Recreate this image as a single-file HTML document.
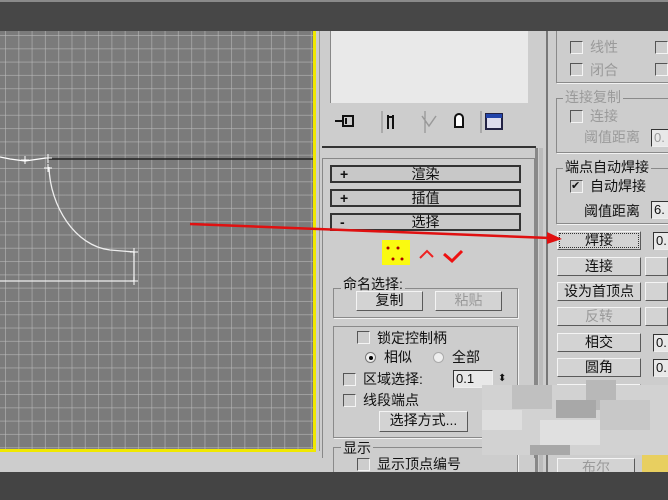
<!DOCTYPE html>
<html><head><meta charset="utf-8"><style>
*{margin:0;padding:0;box-sizing:border-box}
body{width:668px;height:500px;overflow:hidden;background:#cdcdcd;position:relative;font-family:"Liberation Sans","Noto Sans CJK SC",sans-serif;font-size:14px;color:#111}
.a{position:absolute}
.top{left:0;top:0;width:668px;height:31px;background:#474747;border-top:2px solid #8a8a8a}
.bot{left:0;top:472px;width:668px;height:28px;background:#444}
.vp{left:0;top:31px;width:316px;height:421px;background-color:#7b7b7b;border-right:3px solid #f0e800;border-bottom:3px solid #f0e800;
background-image:linear-gradient(90deg,rgba(190,190,190,.55) 1px,transparent 1px),linear-gradient(0deg,rgba(190,190,190,.55) 1px,transparent 1px);
background-size:13.3px 13.3px;background-position:5px 0,0 5px}
.btn{position:absolute;background:#d3d3d3;border:1px solid;border-color:#f4f4f4 #5a5a5a #5a5a5a #f4f4f4;text-align:center;font-size:14px;line-height:17px}
.dis{color:#9a9a9a}
.grp{position:absolute;border:1px solid #8a8a8a;box-shadow:1px 1px 0 #f2f2f2}
.lbl{position:absolute;background:#cdcdcd;padding:0 2px;font-size:14px;line-height:16px}
.cb{position:absolute;width:13px;height:13px;background:#cdcdcd;border:1px solid;border-color:#555 #f4f4f4 #f4f4f4 #555}
.t{position:absolute;font-size:14px;line-height:16px;white-space:nowrap}
.roll{position:absolute;left:330px;width:191px;height:18px;background:#c8c8c8;border:2px solid #333;font-size:14px;line-height:14px}
.roll b{position:absolute;left:8px;font-weight:bold}
.roll span{position:absolute;left:0;right:0;text-align:center}
.inp{position:absolute;background:#e8e8e8;border:1px solid;border-color:#333 #eee #eee #333;font-size:13px;line-height:15px;padding-left:2px}
</style></head><body>
<div class="a top"></div>
<div class="a vp"></div>
<svg class="a" style="left:0;top:31px" width="316" height="421">
<line x1="48" y1="128" x2="313" y2="128" stroke="#222" stroke-width="1.5"/>
<path d="M0 126 L10 128 L25 130 L46 127" stroke="#fff" fill="none" stroke-width="1.3"/>
<path d="M49 136 C50 175 75 215 110 219 L134 221 L134 250 M0 250 L134 250" stroke="#eee" fill="none" stroke-width="1.3"/>
<path d="M25 125v8M21 129h8M48 123v9M44 127h8M48 133v8M44 137h8M134 217v8M130 221h8M134 246v8M130 250h8" stroke="#fff" stroke-width="1"/>
</svg>
<div class="a" style="left:319px;top:31px;width:1px;height:420px;background:#999"></div>
<div class="a" style="left:330px;top:31px;width:198px;height:72px;background:#e9e9e9;border-left:1px solid #888"></div>
<svg class="a" style="left:330px;top:108px" width="200" height="28">
<path d="M5 13h8M13 8h10v10h-10z M16 10v6" stroke="#111" stroke-width="2" fill="none"/>
<line x1="52" y1="3" x2="52" y2="25" stroke="#888"/>
<path d="M58 7v14M63 7v14M58 9h5" stroke="#111" stroke-width="2" fill="none"/>
<line x1="95" y1="3" x2="95" y2="25" stroke="#888"/>
<path d="M92 8l7 10 7-10" stroke="#999" stroke-width="1.5" fill="none"/>
<path d="M125 10a4 4 0 0 1 8 0v9h-8z" stroke="#111" stroke-width="2" fill="#fff"/>
<line x1="151" y1="3" x2="151" y2="25" stroke="#888"/>
<rect x="156" y="6" width="16" height="15" fill="#dde" stroke="#224" stroke-width="2"/><rect x="156" y="6" width="16" height="4" fill="#24a"/>
</svg>
<div class="a" style="left:322px;top:146px;width:214px;height:2px;background:#333"></div>
<div class="a" style="left:322px;top:158px;width:213px;height:300px;border:1px solid #888;border-bottom:none"></div>
<div class="roll" style="top:165px"><b>+</b><span>渲染</span></div>
<div class="roll" style="top:189px"><b>+</b><span>插值</span></div>
<div class="roll" style="top:213px"><b>-</b><span>选择</span></div>
<div class="a" style="left:382px;top:240px;width:28px;height:25px;background:#fafa10"></div>
<svg class="a" style="left:382px;top:240px" width="90" height="26">
<circle cx="6" cy="8" r="1.5" fill="#a00"/><circle cx="16" cy="8" r="1.5" fill="#a00"/><circle cx="11" cy="19" r="1.5" fill="#a00"/><circle cx="20" cy="19" r="1.5" fill="#a00"/>
<path d="M38 18l7-7 6 6" stroke="#e22" stroke-width="2" fill="none"/><path d="M62 14l8 7 10-10" stroke="#e11" stroke-width="3" fill="none"/>
</svg>
<div class="grp" style="left:333px;top:288px;width:185px;height:30px"></div>
<div class="lbl" style="left:341px;top:276px">命名选择:</div>
<div class="btn" style="left:356px;top:291px;width:67px;height:20px">复制</div>
<div class="btn dis" style="left:435px;top:291px;width:67px;height:20px">粘贴</div>
<div class="grp" style="left:333px;top:326px;width:185px;height:112px"></div>
<div class="cb" style="left:357px;top:331px"></div><div class="t" style="left:377px;top:330px">锁定控制柄</div>
<div class="a" style="left:365px;top:352px;width:11px;height:11px;border-radius:50%;background:#eee;border:1px solid #777"><div class="a" style="left:3px;top:3px;width:4px;height:4px;background:#000;border-radius:50%"></div></div>
<div class="t" style="left:384px;top:349px">相似</div>
<div class="a" style="left:433px;top:352px;width:11px;height:11px;border-radius:50%;background:#eee;border:1px solid #aaa"></div>
<div class="t" style="left:452px;top:349px">全部</div>
<div class="cb" style="left:343px;top:373px"></div><div class="t" style="left:363px;top:371px">区域选择:</div>
<div class="inp" style="left:453px;top:370px;width:40px;height:18px">0.1</div>
<div class="t" style="left:498px;top:371px;font-size:10px">⬍</div>
<div class="cb" style="left:343px;top:394px"></div><div class="t" style="left:363px;top:392px">线段端点</div>
<div class="btn" style="left:379px;top:411px;width:89px;height:21px">选择方式...</div>
<div class="grp" style="left:333px;top:447px;width:185px;height:30px"></div>
<div class="lbl" style="left:341px;top:440px">显示</div>
<div class="cb" style="left:357px;top:458px"></div><div class="t" style="left:377px;top:456px">显示顶点编号</div>
<div class="a" style="left:535px;top:148px;width:3px;height:324px;background:#888"></div>
<div class="a" style="left:539px;top:148px;width:4px;height:324px;background:#bbb"></div>
<div class="a" style="left:546px;top:31px;width:2px;height:441px;background:#777"></div>
<div class="grp" style="left:556px;top:31px;width:130px;height:52px;border-top:none"></div>
<div class="cb dis" style="left:570px;top:41px"></div><div class="t dis" style="left:590px;top:39px">线性</div>
<div class="cb dis" style="left:570px;top:63px"></div><div class="t dis" style="left:590px;top:62px">闭合</div>
<div class="cb dis" style="left:655px;top:41px"></div><div class="cb dis" style="left:655px;top:63px"></div>
<div class="grp" style="left:556px;top:98px;width:130px;height:55px"></div>
<div class="lbl dis" style="left:563px;top:89px">连接复制</div>
<div class="cb dis" style="left:570px;top:110px"></div><div class="t dis" style="left:590px;top:108px">连接</div>
<div class="t dis" style="left:584px;top:129px">阈值距离</div><div class="inp dis" style="left:651px;top:129px;width:20px;height:18px">0.</div>
<div class="grp" style="left:556px;top:168px;width:130px;height:56px"></div>
<div class="lbl" style="left:563px;top:159px">端点自动焊接</div>
<div class="cb" style="left:570px;top:180px;font-size:11px;line-height:11px">✔</div><div class="t" style="left:590px;top:178px">自动焊接</div>
<div class="t" style="left:584px;top:203px">阈值距离</div><div class="inp" style="left:651px;top:201px;width:20px;height:18px">6.</div>
<div class="btn" style="left:557px;top:231px;width:84px;height:19px;outline:1px dotted #333;outline-offset:-3px">焊接</div><div class="inp" style="left:653px;top:232px;width:20px;height:18px">0.</div>
<div class="btn" style="left:557px;top:257px;width:84px;height:19px">连接</div>
<div class="btn" style="left:557px;top:282px;width:84px;height:19px">设为首顶点</div>
<div class="btn dis" style="left:557px;top:307px;width:84px;height:19px">反转</div>
<div class="btn" style="left:557px;top:333px;width:84px;height:19px">相交</div><div class="inp" style="left:653px;top:334px;width:20px;height:18px">0.</div>
<div class="btn" style="left:557px;top:358px;width:84px;height:19px">圆角</div><div class="inp" style="left:653px;top:359px;width:20px;height:18px">0.</div>
<div class="btn" style="left:557px;top:384px;width:84px;height:19px">切角</div><div class="inp" style="left:653px;top:385px;width:20px;height:18px">0.</div>
<div class="btn" style="left:557px;top:357px;width:84px;height:19px;display:none"></div>
<div class="btn" style="left:557px;top:312px;display:none"></div>
<div class="btn" style="left:645px;top:257px;width:23px;height:19px"></div>
<div class="btn" style="left:645px;top:282px;width:23px;height:19px"></div>
<div class="btn" style="left:645px;top:307px;width:23px;height:19px"></div>
<div class="btn dis" style="left:557px;top:458px;width:78px;height:19px">布尔</div>
<div class="a" style="left:642px;top:455px;width:26px;height:17px;background:#e8cf60"></div>
<!-- blurred area -->
<div class="a" style="left:482px;top:385px;width:186px;height:70px;background:#d2d2d2"></div>
<div class="a" style="left:512px;top:385px;width:40px;height:24px;background:#c0c0c0"></div>
<div class="a" style="left:586px;top:380px;width:30px;height:30px;background:#b8b8b8"></div>
<div class="a" style="left:556px;top:400px;width:40px;height:18px;background:#a8a8a8"></div>
<div class="a" style="left:482px;top:410px;width:40px;height:20px;background:#dedede"></div>
<div class="a" style="left:540px;top:420px;width:60px;height:25px;background:#e0e0e0"></div>
<div class="a" style="left:600px;top:400px;width:50px;height:30px;background:#c8c8c8"></div>
<div class="a" style="left:530px;top:445px;width:40px;height:10px;background:#a8a8a8"></div>
<svg class="a" style="left:0;top:0" width="668" height="500">
<line x1="190" y1="224" x2="550" y2="238" stroke="#e01010" stroke-width="2.5"/>
<path d="M547 232 L562 239 L547 244 Z" fill="#e01010"/>
</svg>
<div class="a bot"></div>
</body></html>
